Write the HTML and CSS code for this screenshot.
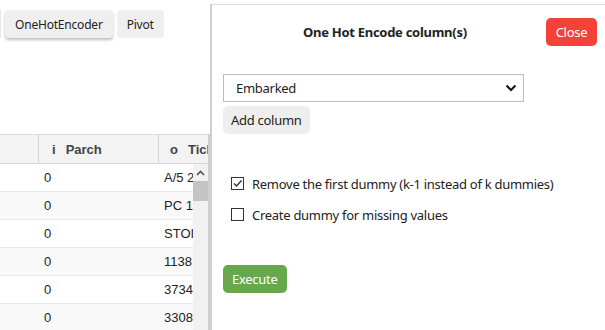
FILE: index.html
```html
<!DOCTYPE html>
<html>
<head>
<meta charset="utf-8">
<link rel="stylesheet" href="styles.css">
</head>
<body>
<div class="page">
  <div class="toolbar">
    <span class="stub"></span>
    <button class="tbtn raised">OneHotEncoder</button>
    <button class="tbtn">Pivot</button>
  </div>
  <div class="grid">
    <div class="ghead">
      <div class="hc c0"></div>
      <div class="hc c1"><span class="type">i</span>Parch</div>
      <div class="hc c2"><span class="type">o</span>Tick</div>
    </div>
    <div class="gbody">
      <div class="rows">
        <div class="row"><div class="c0"></div><div class="c1">0</div><div class="c2">A/5 2</div></div>
        <div class="row alt"><div class="c0"></div><div class="c1">0</div><div class="c2">PC 1</div></div>
        <div class="row"><div class="c0"></div><div class="c1">0</div><div class="c2">STOI</div></div>
        <div class="row alt"><div class="c0"></div><div class="c1">0</div><div class="c2">1138</div></div>
        <div class="row"><div class="c0"></div><div class="c1">0</div><div class="c2">3734</div></div>
        <div class="row alt"><div class="c0"></div><div class="c1">0</div><div class="c2">3308</div></div>
      </div>
      <div class="vscroll">
        <div class="arrow"><svg width="9" height="6" viewBox="0 0 9 6"><path d="M1 5 L4.5 1.5 L8 5" fill="none" stroke="#505050" stroke-width="1.6"/></svg></div>
        <div class="thumb"></div>
      </div>
    </div>
  </div>
</div>

<div class="panel">
  <div class="phead">
    <div class="ptitle">One Hot Encode column(s)</div>
    <button class="close">Close</button>
  </div>
  <div class="pbody">
    <div class="selectbox">
      <span>Embarked</span>
      <svg width="12" height="8" viewBox="0 0 12 8"><path d="M1.5 1.5 L6 6 L10.5 1.5" fill="none" stroke="#111" stroke-width="2"/></svg>
    </div>
    <button class="addcol">Add column</button>
    <div class="opts">
      <label class="opt"><span class="cb checked"><svg width="11" height="11" viewBox="0 0 11 11"><path d="M2 5.5 L4.5 8 L9.5 2.5" fill="none" stroke="#333" stroke-width="1.4"/></svg></span>Remove the first dummy (k-1 instead of k dummies)</label>
      <label class="opt"><span class="cb"></span>Create dummy for missing values</label>
    </div>
    <button class="exec">Execute</button>
  </div>
</div>
</body>
</html>
```

FILE: styles.css
```css
* { box-sizing: border-box; }
html, body { margin: 0; padding: 0; background: #fff; overflow: hidden; }
body { width: 605px; height: 330px; position: relative; font-family: "Segoe UI", "Noto Sans", sans-serif; }

.page { display: flex; flex-direction: column; }

.toolbar { display: flex; gap: 4px; padding-top: 10px; height: 134px; align-items: flex-start; }
.stub { width: 1px; height: 28px; background: #e6e6e6; }
.tbtn {
  font-family: "Noto Sans", sans-serif; font-size: 12px; color: #222; letter-spacing: -0.2px;
  background: #efefef; border: none; border-radius: 4px; height: 28px; padding: 0 10px;
}
.tbtn.raised { box-shadow: 0 2px 3px rgba(0,0,0,0.25); }

.grid { width: 210px; font-family: "Liberation Sans", Arial, sans-serif; font-size: 13px; color: #222; border-right: 2px solid #d0d0d0; }
.ghead { display: flex; height: 30px; background: #f3f3f3; border-top: 1px solid #dcdcdc; border-bottom: 1px solid #d4d4d4; }
.hc { display: flex; align-items: center; font-weight: bold; color: #444; border-right: 1px solid #d4d4d4; }
.ghead .c0 { width: 39px; }
.ghead .c1 { width: 120px; padding-left: 13px; }
.ghead .c2 { flex: 1; padding-left: 11px; border-right: none; overflow: hidden; white-space: nowrap; }
.type { margin-right: 10px; }

.gbody { display: flex; }
.rows { width: 193px; overflow: hidden; }
.row { display: flex; height: 28px; align-items: center; border-bottom: 1px solid #e6e6e6; background: #fff; }
.row.alt { background: #f9f9f9; }
.row .c0 { width: 39px; }
.row .c1 { width: 120px; padding-left: 5px; }
.row .c2 { flex: 1; padding-left: 5px; white-space: nowrap; overflow: hidden; }
.vscroll { width: 15px; background: #f1f1f1; display: flex; flex-direction: column; align-items: center; }
.arrow { height: 17px; display: flex; align-items: center; justify-content: center; }
.thumb { width: 15px; height: 20px; background: #c4c4c4; }

.panel {
  position: absolute; left: 210px; top: 4px; width: 395px; height: 330px;
  background: #fff; border-left: 2px solid #cfcfcf; border-top: 1px solid #d6dde3;
  font-family: "Segoe UI", "Noto Sans", sans-serif; color: #222; letter-spacing: -0.28px;
}
.phead { display: flex; align-items: center; justify-content: space-between; padding: 12px 8px 0 91px; height: 41px; }
.ptitle { font-weight: bold; font-size: 13px; color: #222; }
.close { background: #f44336; color: #fff; border: none; border-radius: 5px; height: 28px; width: 51px; font-family: inherit; font-size: 13px; letter-spacing: -0.28px; }

.pbody { padding: 28px 0 0 11px; display: flex; flex-direction: column; align-items: flex-start; }
.selectbox {
  width: 301px; height: 28px; border: 1px solid #bbb; display: flex; align-items: center; justify-content: space-between;
  padding: 0 6px 0 12px; font-size: 13px; color: #222;
}
.addcol { margin-top: 4px; background: #eee; border: none; border-radius: 5px; height: 28px; padding: 0 8px; font-family: inherit; font-size: 13px; color: #222; letter-spacing: -0.28px; }
.opts { margin-top: 40px; display: flex; flex-direction: column; gap: 12px; }
.opt { display: flex; align-items: center; font-size: 13px; color: #222; height: 19px; }
.cb { width: 13px; height: 13px; border: 1px solid #333; margin: 0 8px 0 8px; display: flex; align-items: center; justify-content: center; background: #fff; }
.exec { margin-top: 41px; background: #67a84d; color: #fff; border: none; border-radius: 5px; height: 28px; padding: 0 9px; font-family: inherit; font-size: 13px; letter-spacing: -0.28px; }
```
